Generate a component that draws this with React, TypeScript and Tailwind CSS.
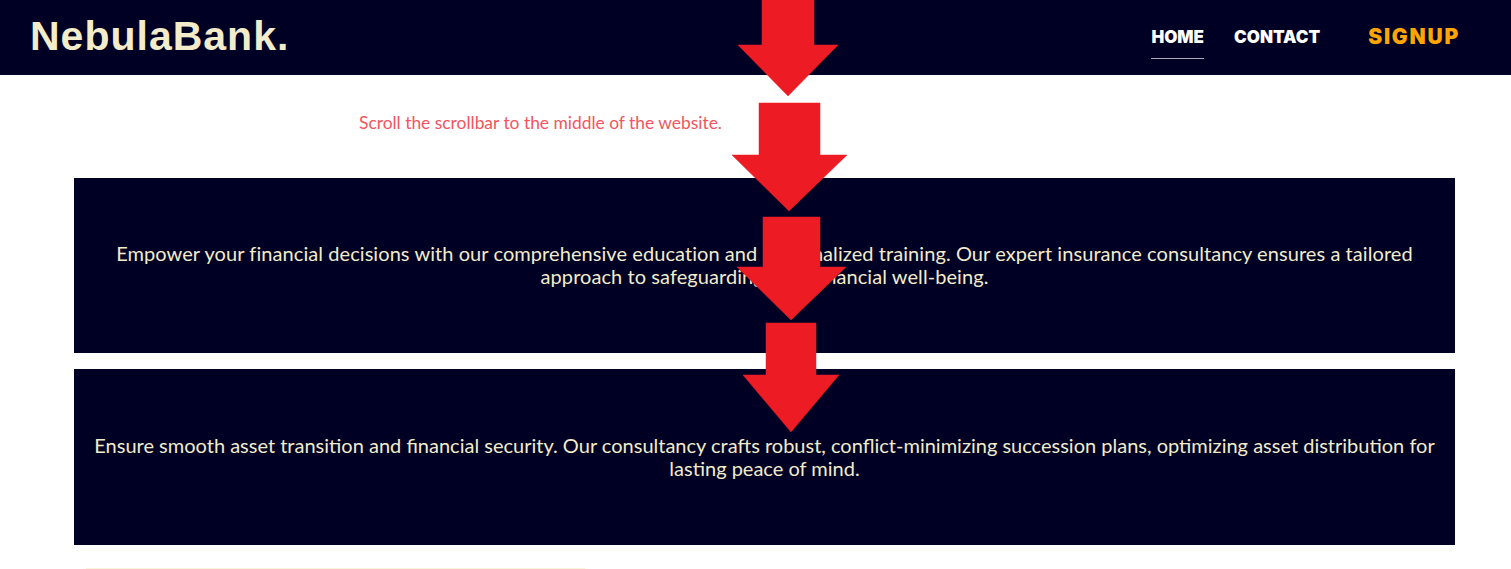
const arrows = [
  'M762 -2H814V45H838L788 96L738 45H762Z',
  'M759 103H820V155H847L789 211L732 155H759Z',
  'M763 217H820V267H846L791 320L737 267H763Z',
  'M766 323H816V375H839L791 432L743 375H766Z',
];

const NavLink = ({ label, active }: { label: string; active?: boolean }) => (
  <a
    href="#"
    className={`block h-[59px] border-b pt-[26px] font-['Inter',sans-serif] text-[17px] font-black leading-[22px] text-white ${
      active ? 'border-[#a9a9b8]' : 'border-transparent'
    }`}
  >
    {label}
  </a>
);

const Card = ({ text, className }: { text: string; className: string }) => (
  <div className={`flex items-center justify-center bg-[#000025] text-center font-['Lato',sans-serif] text-[20px] leading-[23px] text-[#f2eccb] ${className}`}>
    <p>{text}</p>
  </div>
);

export default function App() {
  return (
    <div className="relative h-[569px] w-full overflow-hidden bg-white">
      <header className="flex h-[75px] items-start justify-between bg-[#000025] pl-[30px] pr-[51px]">
        <a href="#" className="mt-[13px] font-['Liberation_Sans',sans-serif] text-[41px] font-bold leading-[47px] tracking-[1px] text-[#f2eccb]">
          NebulaBank.
        </a>
        <nav className="flex items-start">
          <NavLink label="HOME" active />
          <div className="ml-[30px]"><NavLink label="CONTACT" /></div>
          <a
            href="#"
            className="ml-[48px] mt-[24px] font-['Inter',sans-serif] text-[21px] font-black leading-[26px] tracking-[1.8px] text-[#ffa500]"
          >
            SIGNUP
          </a>
        </nav>
      </header>

      <main className="pl-[74px] pr-[56px]">
        <p className="ml-[285px] mt-[38px] h-[65px] font-['Lato',sans-serif] text-[17.4px] leading-[20px] text-[#f2555e]">
          Scroll the scrollbar to the middle of the website.
        </p>
        <div className="flex flex-col gap-[16px]">
          <Card
            className="h-[175px] px-[40px] pb-[1px] tracking-[0.07px]"
            text="Empower your financial decisions with our comprehensive education and personalized training. Our expert insurance consultancy ensures a tailored approach to safeguarding your financial well-being."
          />
          <Card
            className="h-[176px] px-[18px]"
            text="Ensure smooth asset transition and financial security. Our consultancy crafts robust, conflict-minimizing succession plans, optimizing asset distribution for lasting peace of mind."
          />
        </div>
        <div className="ml-[12px] mt-[23px] h-px w-[499px] bg-[#f7f5dc]" />
      </main>

      <svg className="absolute left-0 top-0" width="1511" height="569" viewBox="0 0 1511 569" fill="#ed1c24" stroke="#ed1c24" strokeWidth="0.5" strokeLinejoin="round">
        {arrows.map((d) => (
          <path key={d} d={d} />
        ))}
      </svg>
    </div>
  );
}
